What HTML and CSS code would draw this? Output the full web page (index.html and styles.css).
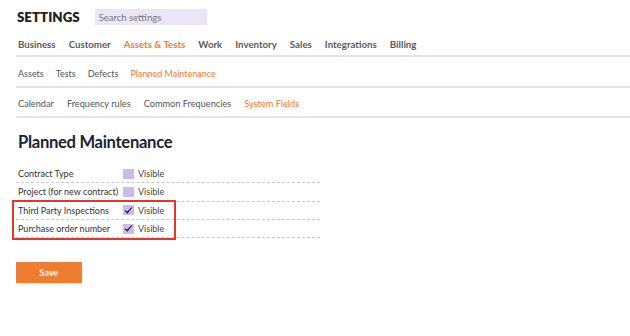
FILE: index.html
```html
<!DOCTYPE html>
<html lang="en">
<head>
    <meta charset="UTF-8">
    <meta name="viewport" content="width=device-width, initial-scale=1.0">
    <link rel="stylesheet" href="styles.css">
    <title>Settings</title>
</head>
<body>
    <div class="top">
        <h1 class="title">SETTINGS</h1>
        <input class="search" type="text" placeholder="Search settings">
    </div>

    <nav class="tabs main-tabs">
        <a href="#">Business</a>
        <a href="#">Customer</a>
        <a href="#" class="active">Assets &amp; Tests</a>
        <a href="#">Work</a>
        <a href="#">Inventory</a>
        <a href="#">Sales</a>
        <a href="#">Integrations</a>
        <a href="#">Billing</a>
    </nav>

    <nav class="tabs sub-tabs">
        <a href="#">Assets</a>
        <a href="#">Tests</a>
        <a href="#">Defects</a>
        <a href="#" class="active">Planned Maintenance</a>
    </nav>

    <nav class="tabs sub-tabs third">
        <a href="#">Calendar</a>
        <a href="#">Frequency rules</a>
        <a href="#">Common Frequencies</a>
        <a href="#" class="active">System Fields</a>
    </nav>

    <h2 class="heading">Planned Maintenance</h2>

    <div class="fields">
        <div class="row">
            <span class="label">Contract Type</span>
            <span class="check"></span>
            <span class="visible">Visible</span>
        </div>
        <div class="row">
            <span class="label">Project (for new contract)</span>
            <span class="check"></span>
            <span class="visible">Visible</span>
        </div>
        <div class="row">
            <span class="label">Third Party Inspections</span>
            <span class="check checked"><svg viewBox="0 0 10 10" width="9" height="9"><path d="M1.2 5.4 L3.6 8.2 L8.8 1.6 L3.8 6.3 Z" fill="#2b2440" stroke="#2b2440" stroke-width="0.9" stroke-linejoin="round"/></svg></span>
            <span class="visible">Visible</span>
        </div>
        <div class="row">
            <span class="label">Purchase order number</span>
            <span class="check checked"><svg viewBox="0 0 10 10" width="9" height="9"><path d="M1.2 5.4 L3.6 8.2 L8.8 1.6 L3.8 6.3 Z" fill="#2b2440" stroke="#2b2440" stroke-width="0.9" stroke-linejoin="round"/></svg></span>
            <span class="visible">Visible</span>
        </div>
        <span class="highlight"></span>
    </div>

    <button class="save-button">Save</button>
</body>
</html>
```

FILE: styles.css
```css
body {
    margin: 0;
    padding: 0 0 0 16px;
    font-family: Lato, 'Open Sans', sans-serif;
    color: #4a4a4a;
    background: #fff;
}

a {
    text-decoration: none;
}

/* header */
.top {
    display: flex;
    align-items: center;
    height: 34px;
}

.title {
    margin: 0 15px 0 1px;
    font-size: 13.3px;
    font-weight: 800;
    color: #222;
}

.search {
    width: 112px;
    height: 16px;
    box-sizing: border-box;
    border: none;
    padding: 0 4px;
    background-color: #ece5f8;
    font-family: inherit;
    font-size: 9.5px;
    color: #666;
}

.search::placeholder {
    color: #777;
}

/* tabs */
.tabs {
    display: flex;
    border-bottom: 2px solid #e3e3e3;
}

.tabs a {
    color: #555;
    line-height: 12px;
}

.tabs a.active {
    color: #ef7b30;
}

.main-tabs {
    gap: 13px;
    padding: 4px 2px 5px;
    font-size: 9.7px;
    font-weight: 700;
}

.main-tabs a {
    color: #5a5a5a;
}

.sub-tabs {
    gap: 12px;
    padding: 11px 2px 6px;
    font-size: 9px;
}

.sub-tabs.third {
    gap: 13px;
    padding: 10px 2px 6px;
    font-size: 9.2px;
}

/* fields */
.heading {
    margin: 12px 0 0 2px;
    font-size: 16.6px;
    line-height: 24px;
    font-weight: 700;
    letter-spacing: -0.3px;
    color: #1b2331;
}

.fields {
    position: relative;
    width: 304px;
    margin-top: 11px;
    font-size: 9px;
    color: #333;
}

.row {
    display: flex;
    align-items: center;
    height: 17.3px;
    padding-left: 2px;
    border-bottom: 1px dashed #c8c8c8;
}

.label {
    width: 105px;
}

.check {
    display: flex;
    align-items: center;
    justify-content: center;
    width: 11px;
    height: 10px;
    margin-right: 4px;
    background-color: #cbbbe6;
}

.visible {
    color: #444;
}

.highlight {
    position: absolute;
    left: -4px;
    top: 35px;
    width: 160px;
    height: 36px;
    border: 2px solid #e8352b;
}

.save-button {
    display: block;
    margin-top: 24px;
    width: 66px;
    height: 21px;
    border: none;
    background-color: #ee7d31;
    color: #fff;
    font-family: inherit;
    font-size: 9px;
    font-weight: 700;
    cursor: pointer;
}
```
